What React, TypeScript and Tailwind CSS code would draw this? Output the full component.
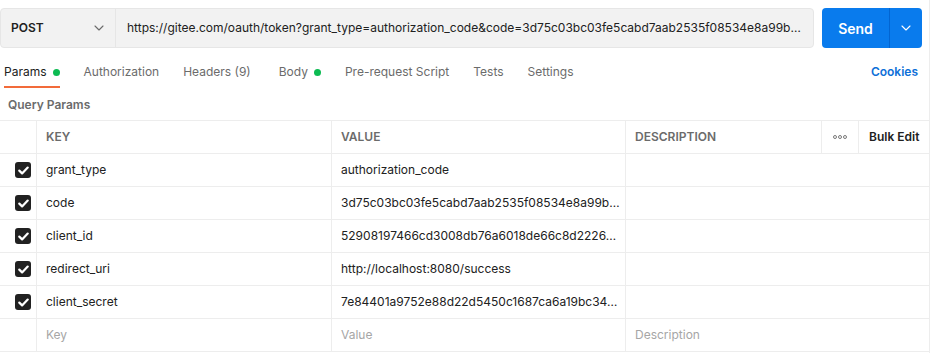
import React from "react";

const font = { fontFamily: "Inter, 'Noto Sans', sans-serif" };

function Chevron({ className = "" }: { className?: string }) {
  return (
    <svg width="10" height="6" viewBox="0 0 10 6" className={className} fill="none">
      <path d="M1 1l4 4 4-4" stroke="currentColor" strokeWidth="1.1" strokeLinecap="round" strokeLinejoin="round" />
    </svg>
  );
}

function Check() {
  return (
    <div className="w-4 h-4 rounded-[3px] bg-[#212121] flex items-center justify-center">
      <svg width="11" height="9" viewBox="0 0 11 9" fill="none">
        <path d="M1.3 4.6l2.8 2.8L9.7 1.6" stroke="#fff" strokeWidth="2.2" strokeLinecap="round" strokeLinejoin="round" />
      </svg>
    </div>
  );
}

const rows = [
  ["grant_type", "authorization_code"],
  ["code", "3d75c03bc03fe5cabd7aab2535f08534e8a99b…"],
  ["client_id", "52908197466cd3008db76a6018de66c8d2226…"],
  ["redirect_uri", "http://localhost:8080/success"],
  ["client_secret", "7e84401a9752e88d22d5450c1687ca6a19bc34…"],
];

const tabs: { label: string; dot?: boolean; active?: boolean; extraCls?: string }[] = [
  { label: "Params", dot: true, active: true },
  { label: "Authorization" },
  { label: "Headers (9)" },
  { label: "Body", dot: true, extraCls: "ml-1" },
  { label: "Pre-request Script" },
  { label: "Tests" },
  { label: "Settings" },
];

export default function App() {
  return (
    <div className="w-[946px] h-[353px] bg-white overflow-hidden" style={font}>
      <div className="w-[930px] h-[353px] border-r border-[#ededed] flex flex-col">
        {/* top bar */}
        <div className="flex mt-2 pr-[7px] h-10">
          <div className="w-[814px] h-10 flex rounded-[4px] border border-[#e6e6e6] bg-[#f2f2f2] overflow-hidden">
            <div className="w-[115px] shrink-0 flex items-center justify-between pl-[10px] pr-[11px] border-r border-[#e6e6e6]">
              <span className="text-[12px] font-semibold text-[#212121]">POST</span>
              <Chevron className="text-[#6b6b6b]" />
            </div>
            <div className="flex-1 min-w-0 flex items-center pl-[11px] pr-[8px]">
              <span className="block truncate text-[12px] text-[#212121]">
                https://gitee.com/oauth/token?grant_type=authorization_code&amp;code=3d75c03bc03fe5cabd7aab2535f08534e8a99b…
              </span>
            </div>
          </div>
          <div className="ml-2 w-[100px] h-10 flex rounded-[4px] bg-[#097bed] text-white">
            <div className="w-[67px] flex items-center justify-center text-[14px] font-semibold">Send</div>
            <div className="flex-1 border-l border-[#0265d2] flex items-center justify-center">
              <Chevron className="text-white" />
            </div>
          </div>
        </div>

        {/* tabs */}
        <div className="flex items-start mt-2 h-8 pl-1 pr-[11px]">
          <div className="flex gap-6">
            {tabs.map((t) => (
              <div
                key={t.label}
                className={`h-8 pt-2 flex items-start border-b-2 ${t.extraCls ?? ""} ${t.active ? "border-[#f26b3a] text-[#212121]" : "border-transparent text-[#6b6b6b]"}`}
              >
                <span className="text-[12px] leading-4 flex items-center whitespace-pre">
                  {t.label}
                  {t.dot ? <span className="ml-[6px] w-[7px] h-[7px] rounded-full bg-[#0cbb52] inline-block" /> : null}
                </span>
              </div>
            ))}
          </div>
          <div className="ml-auto pt-2 text-[12px] leading-4 font-semibold text-[#0d6fd8]">Cookies</div>
        </div>

        {/* query params */}
        <div className="mt-[9px] pl-2 text-[12px] leading-4 font-semibold text-[#6b6b6b]">Query Params</div>

        {/* table */}
        <div className="mt-[7px] border-t border-[#ededed]">
          <div className="grid grid-cols-[37px_295px_294px_196px_37px_70px] h-[33px] border-b border-[#ededed] text-[12px] font-semibold">
            <div className="border-r border-[#ededed]" />
            <div className="border-r border-[#ededed] flex items-center pl-[9px] text-[#6b6b6b]">KEY</div>
            <div className="border-r border-[#ededed] flex items-center pl-[9px] text-[#6b6b6b]">VALUE</div>
            <div className="border-r border-[#ededed] flex items-center pl-[9px] text-[#6b6b6b]">DESCRIPTION</div>
            <div className="border-r border-[#ededed] flex items-center justify-center text-[#6b6b6b]">
              <svg width="14" height="4" viewBox="0 0 14 4" fill="none">
                <circle cx="2" cy="2" r="1.5" stroke="#6b6b6b" strokeWidth="0.9" />
                <circle cx="7" cy="2" r="1.5" stroke="#6b6b6b" strokeWidth="0.9" />
                <circle cx="12" cy="2" r="1.5" stroke="#6b6b6b" strokeWidth="0.9" />
              </svg>
            </div>
            <div className="flex items-center pl-[10px] text-[#212121]">Bulk Edit</div>
          </div>
          {rows.map(([k, v]) => (
            <div key={k} className="grid grid-cols-[37px_295px_294px_1fr] h-[33px] border-b border-[#ededed] text-[12px] text-[#212121]">
              <div className="border-r border-[#ededed] flex items-center justify-end pr-[5px]">
                <Check />
              </div>
              <div className="border-r border-[#ededed] flex items-center pl-[9px]">{k}</div>
              <div className="border-r border-[#ededed] flex items-center pl-[9px] whitespace-nowrap overflow-hidden">{v}</div>
              <div />
            </div>
          ))}
          <div className="grid grid-cols-[37px_295px_294px_1fr] h-[33px] border-b border-[#ededed] text-[12px] text-[#a6a6a6]">
            <div className="border-r border-[#ededed]" />
            <div className="border-r border-[#ededed] flex items-center pl-[9px]">Key</div>
            <div className="border-r border-[#ededed] flex items-center pl-[9px]">Value</div>
            <div className="flex items-center pl-[9px]">Description</div>
          </div>
        </div>
      </div>
    </div>
  );
}
